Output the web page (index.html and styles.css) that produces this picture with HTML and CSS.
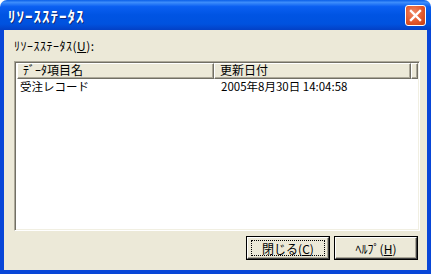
FILE: index.html
```html
<!DOCTYPE html>
<html lang="ja">
<head>
    <meta charset="UTF-8">
    <title>ﾘｿｰｽｽﾃｰﾀｽ</title>
    <link rel="stylesheet" href="styles.css">
</head>
<body>
    <div class="window">
        <!-- Title bar -->
        <div class="titlebar">
            <span class="title">ﾘｿｰｽｽﾃｰﾀｽ</span>
            <div class="close-btn">
                <svg width="13" height="13" viewBox="0 0 13 13">
                    <path d="M2 2 L11 11 M11 2 L2 11" stroke="#fff" stroke-width="2.4" stroke-linecap="square"/>
                </svg>
            </div>
        </div>

        <div class="frame">
            <div class="label">ﾘｿｰｽｽﾃｰﾀｽ(<u>U</u>):</div>

            <div class="listview">
                <div class="header">
                    <div class="col col-name">ﾃﾞｰﾀ項目名</div>
                    <div class="col col-date">更新日付</div>
                    <div class="col col-rest"></div>
                </div>
                <div class="row">
                    <div class="cell cell-name">受注レコード</div>
                    <div class="cell">2005年8月30日 14:04:58</div>
                </div>
            </div>

            <div class="buttons">
                <div class="btn btn-default"><span class="focus">閉じる(<u>C</u>)</span></div>
                <div class="btn">ﾍﾙﾌﾟ(<u>H</u>)</div>
            </div>
        </div>
    </div>
</body>
</html>
```

FILE: styles.css
```css
body {
    margin: 0;
    padding: 0;
    background-color: #fff;
    font-family: "Noto Sans CJK JP", "DejaVu Sans", sans-serif;
    font-size: 12px;
    overflow: hidden;
}

.window {
    width: 431px;
    height: 274px;
    display: flex;
    flex-direction: column;
}

.titlebar {
    height: 30px;
    border-radius: 7px 7px 0 0;
    background: linear-gradient(to bottom, #0a5fe8 0%, #3d8dfb 8%, #0a5ff1 22%, #0054e3 50%, #0052df 80%, #0340c5 100%);
    display: flex;
    align-items: center;
    justify-content: space-between;
    padding: 0 5px 0 8px;
}

.title {
    color: #fff;
    font-weight: bold;
    font-size: 15px;
    letter-spacing: 1px;
    text-shadow: 1px 1px 0 #0b2a7a;
}

.close-btn {
    width: 21px;
    height: 21px;
    border: 1px solid #fff;
    border-radius: 3px;
    background: radial-gradient(circle at 40% 35%, #f08a68 0%, #e2582c 55%, #c63d10 100%);
    display: flex;
    align-items: center;
    justify-content: center;
    box-sizing: border-box;
}

.frame {
    flex: 1;
    background-color: #ece9d8;
    border: 4px solid #0846d8;
    border-top: none;
    display: flex;
    flex-direction: column;
    padding: 0 7px 0 10px;
}

.label {
    margin-top: 8px;
    height: 15px;
    line-height: 15px;
    letter-spacing: 0.5px;
    color: #000;
}

.listview {
    margin-top: 8px;
    height: 170px;
    background: #fff;
    border-top: 1px solid #aca899;
    border-left: 1px solid #aca899;
    border-right: 1px solid #fff;
    border-bottom: 1px solid #fff;
    box-shadow: inset 1px 1px 0 #716f64, inset -1px -1px 0 #f1efe2;
    padding: 1px 1px 1px 2px;
    box-sizing: border-box;
}

.header {
    display: flex;
    height: 16px;
}

.col {
    box-sizing: border-box;
    background: #ece9d8;
    border-top: 1px solid #fff;
    border-left: 1px solid #fff;
    border-right: 1px solid #716f64;
    border-bottom: 1px solid #716f64;
    box-shadow: inset -1px -1px 0 #aca899;
    padding-left: 5px;
    line-height: 12px;
    color: #000;
}

.col-name {
    width: 201px;
}

.col-date {
    width: 201px;
}

.col-rest {
    flex: 1;
}

.row {
    display: flex;
    height: 15px;
    line-height: 15px;
    font-size: 11.5px;
}

.cell {
    box-sizing: border-box;
    padding-left: 3px;
}

.cell-name {
    width: 201px;
}

.buttons {
    display: flex;
    justify-content: flex-end;
    gap: 6px;
    margin-top: 6px;
    padding-right: 3px;
}

.btn {
    width: 82px;
    height: 22px;
    box-sizing: border-box;
    background: #ece9d8;
    border-top: 1px solid #fff;
    border-left: 1px solid #fff;
    border-right: 1px solid #404040;
    border-bottom: 1px solid #404040;
    box-shadow: inset -1px -1px 0 #aca899, 0 0 0 1px #000;
    display: flex;
    align-items: center;
    justify-content: center;
    color: #000;
}

.focus {
    display: flex;
    align-items: center;
    justify-content: center;
    width: 72px;
    height: 14px;
    border: 1px dotted #000;
}
```
